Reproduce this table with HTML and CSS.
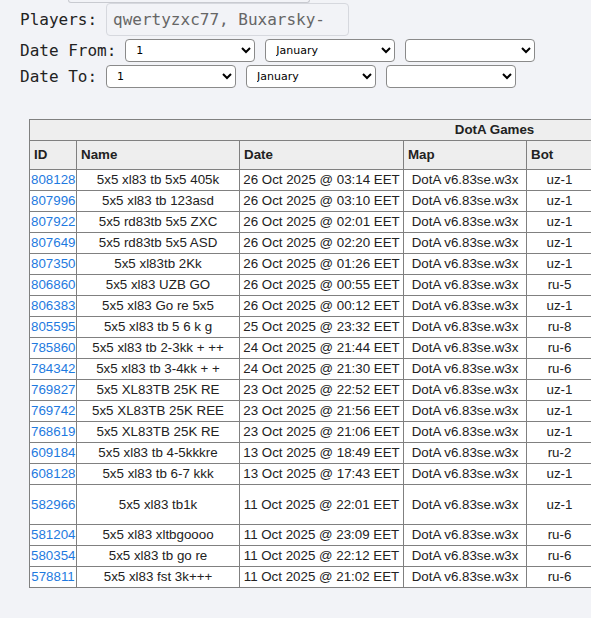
FILE: index.html
```html
<!DOCTYPE html>
<html>
<head>
<meta charset="utf-8">
<link rel="stylesheet" href="styles.css">
</head>
<body>
<div class="stub"></div>
<form class="filters">
  <div class="row">
    <label class="lbl">Players:</label>
    <input class="players" type="text" value="qwertyzxc77, Buxarsky-">
  </div>
  <div class="row">
    <label class="lbl">Date From:</label>
    <select class="sel"><option>1</option></select>
    <select class="sel"><option>January</option></select>
    <select class="sel"><option></option></select>
  </div>
  <div class="row">
    <label class="lbl">Date To:</label>
    <select class="sel"><option>1</option></select>
    <select class="sel"><option>January</option></select>
    <select class="sel"><option></option></select>
  </div>
</form>
<div class="wrap">
<table class="games">
  <colgroup>
    <col class="c-id"><col class="c-name"><col class="c-date"><col class="c-map"><col class="c-bot"><col class="c-dur"><col class="c-pl">
  </colgroup>
  <thead>
    <tr class="cap"><th colspan="7">DotA Games</th></tr>
    <tr class="hdr"><th>ID</th><th>Name</th><th>Date</th><th>Map</th><th>Bot</th><th>Duration</th><th>Players</th></tr>
  </thead>
  <tbody>
    <tr><td><a href="#">808128</a></td><td>5x5 xl83 tb 5x5 405k</td><td>26 Oct 2025 @ 03:14 EET</td><td>DotA v6.83se.w3x</td><td>uz-1</td><td>45:12</td><td>10</td></tr>
    <tr><td><a href="#">807996</a></td><td>5x5 xl83 tb 123asd</td><td>26 Oct 2025 @ 03:10 EET</td><td>DotA v6.83se.w3x</td><td>uz-1</td><td>02:40</td><td>10</td></tr>
    <tr><td><a href="#">807922</a></td><td>5x5 rd83tb 5x5 ZXC</td><td>26 Oct 2025 @ 02:01 EET</td><td>DotA v6.83se.w3x</td><td>uz-1</td><td>51:03</td><td>10</td></tr>
    <tr><td><a href="#">807649</a></td><td>5x5 rd83tb 5x5 ASD</td><td>26 Oct 2025 @ 02:20 EET</td><td>DotA v6.83se.w3x</td><td>uz-1</td><td>03:15</td><td>10</td></tr>
    <tr><td><a href="#">807350</a></td><td>5x5 xl83tb 2Kk</td><td>26 Oct 2025 @ 01:26 EET</td><td>DotA v6.83se.w3x</td><td>uz-1</td><td>32:48</td><td>10</td></tr>
    <tr><td><a href="#">806860</a></td><td>5x5 xl83 UZB GO</td><td>26 Oct 2025 @ 00:55 EET</td><td>DotA v6.83se.w3x</td><td>ru-5</td><td>28:30</td><td>10</td></tr>
    <tr><td><a href="#">806383</a></td><td>5x5 xl83 Go re 5x5</td><td>26 Oct 2025 @ 00:12 EET</td><td>DotA v6.83se.w3x</td><td>uz-1</td><td>40:05</td><td>10</td></tr>
    <tr><td><a href="#">805595</a></td><td>5x5 xl83 tb 5 6 k g</td><td>25 Oct 2025 @ 23:32 EET</td><td>DotA v6.83se.w3x</td><td>ru-8</td><td>37:22</td><td>10</td></tr>
    <tr><td><a href="#">785860</a></td><td>5x5 xl83 tb 2-3kk + ++</td><td>24 Oct 2025 @ 21:44 EET</td><td>DotA v6.83se.w3x</td><td>ru-6</td><td>44:19</td><td>10</td></tr>
    <tr><td><a href="#">784342</a></td><td>5x5 xl83 tb 3-4kk + +</td><td>24 Oct 2025 @ 21:30 EET</td><td>DotA v6.83se.w3x</td><td>ru-6</td><td>06:51</td><td>10</td></tr>
    <tr><td><a href="#">769827</a></td><td>5x5 XL83TB 25K RE</td><td>23 Oct 2025 @ 22:52 EET</td><td>DotA v6.83se.w3x</td><td>uz-1</td><td>39:44</td><td>10</td></tr>
    <tr><td><a href="#">769742</a></td><td>5x5 XL83TB 25K REE</td><td>23 Oct 2025 @ 21:56 EET</td><td>DotA v6.83se.w3x</td><td>uz-1</td><td>47:10</td><td>10</td></tr>
    <tr><td><a href="#">768619</a></td><td>5x5 XL83TB 25K RE</td><td>23 Oct 2025 @ 21:06 EET</td><td>DotA v6.83se.w3x</td><td>uz-1</td><td>41:27</td><td>10</td></tr>
    <tr><td><a href="#">609184</a></td><td>5x5 xl83 tb 4-5kkkre</td><td>13 Oct 2025 @ 18:49 EET</td><td>DotA v6.83se.w3x</td><td>ru-2</td><td>35:58</td><td>10</td></tr>
    <tr><td><a href="#">608128</a></td><td>5x5 xl83 tb 6-7 kkk</td><td>13 Oct 2025 @ 17:43 EET</td><td>DotA v6.83se.w3x</td><td>uz-1</td><td>49:33</td><td>10</td></tr>
    <tr class="tall"><td><a href="#">582966</a></td><td>5x5 xl83 tb1k</td><td>11 Oct 2025 @ 22:01 EET</td><td>DotA v6.83se.w3x</td><td>uz-1</td><td>52:16</td><td>10</td></tr>
    <tr><td><a href="#">581204</a></td><td>5x5 xl83 xltbgoooo</td><td>11 Oct 2025 @ 23:09 EET</td><td>DotA v6.83se.w3x</td><td>ru-6</td><td>38:41</td><td>10</td></tr>
    <tr><td><a href="#">580354</a></td><td>5x5 xl83 tb go re</td><td>11 Oct 2025 @ 22:12 EET</td><td>DotA v6.83se.w3x</td><td>ru-6</td><td>04:09</td><td>10</td></tr>
    <tr><td><a href="#">578811</a></td><td>5x5 xl83 fst 3k+++</td><td>11 Oct 2025 @ 21:02 EET</td><td>DotA v6.83se.w3x</td><td>ru-6</td><td>43:55</td><td>10</td></tr>
  </tbody>
</table>
</div>
</body>
</html>
```

FILE: styles.css
```css
html, body {
  margin: 0;
  padding: 0;
  background: #f2f3f7;
  overflow-x: hidden;
}

body {
  color: #222;
  font-family: "DejaVu Sans Mono", monospace;
  font-size: 16px;
}

.stub {
  margin-left: 68px;
  width: 240px;
  height: 2px;
  border: 1px solid #c8cad0;
  border-top: none;
  border-radius: 0 0 4px 4px;
}

.filters {
  margin: 0;
  padding: 0 0 0 20px;
  display: flex;
  flex-direction: column;
  gap: 3px;
}

.row {
  display: flex;
  align-items: center;
}

.lbl {
  font-family: "DejaVu Sans Mono", monospace;
  font-size: 16px;
  color: #222;
  margin-right: 9px;
}

.players {
  box-sizing: border-box;
  width: 243px;
  height: 33px;
  margin: 0;
  padding: 0 6px;
  border: 1px solid #d6d8de;
  border-radius: 4px;
  background: #f2f3f7;
  color: #666;
  font-family: "DejaVu Sans Mono", monospace;
  font-size: 16px;
}

.sel {
  box-sizing: border-box;
  width: 130px;
  height: 23px;
  margin: 0 10px 0 0;
  padding: 0 4px 0 6px;
  border: 1px solid #8a8a8a;
  border-radius: 4px;
  background-color: #fff;
  color: #000;
  font-family: "DejaVu Sans", Verdana, sans-serif;
  font-size: 11px;
}

.wrap {
  margin-top: 31px;
  padding-left: 29px;
  overflow: hidden;
}

.games {
  border-collapse: collapse;
  table-layout: fixed;
  width: 930px;
  font-family: "Liberation Sans", Arial, sans-serif;
  font-size: 13.33px;
  color: #222;
  background: #fff;
}

.c-id { width: 47px; }
.c-name { width: 163px; }
.c-date { width: 164px; }
.c-map { width: 123px; }
.c-bot { width: 66px; }
.c-dur { width: 120px; }
.c-pl { width: 247px; }

.games th,
.games td {
  border: 1px solid #808080;
  line-height: 16px;
  white-space: nowrap;
}

.games th {
  background: #eeeeee;
  font-weight: bold;
  text-align: left;
  padding: 6px 4px;
}

.games .cap th {
  text-align: center;
  padding: 2px 4px;
}

.games td {
  text-align: center;
  padding: 2px 1px;
}

.games td a {
  color: #1e7ae0;
  text-decoration: none;
}

.games .tall td {
  height: 35px;
}
```
